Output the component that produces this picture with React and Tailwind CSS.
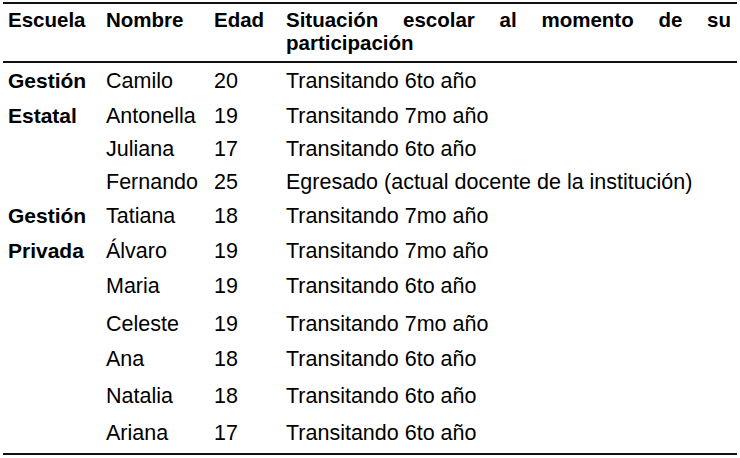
const rows = [
  { escuela: "Gestión", nombre: "Camilo", edad: "20", situacion: "Transitando 6to año", h: "h-[35px]" },
  { escuela: "Estatal", nombre: "Antonella", edad: "19", situacion: "Transitando 7mo año", h: "h-[33px]" },
  { escuela: "", nombre: "Juliana", edad: "17", situacion: "Transitando 6to año", h: "h-[33px]" },
  { escuela: "", nombre: "Fernando", edad: "25", situacion: "Egresado (actual docente de la institución)", h: "h-[34px]" },
  { escuela: "Gestión", nombre: "Tatiana", edad: "18", situacion: "Transitando 7mo año", h: "h-[35px]" },
  { escuela: "Privada", nombre: "Álvaro", edad: "19", situacion: "Transitando 7mo año", h: "h-[35px]" },
  { escuela: "", nombre: "Maria", edad: "19", situacion: "Transitando 6to año", h: "h-[38px]" },
  { escuela: "", nombre: "Celeste", edad: "19", situacion: "Transitando 7mo año", h: "h-[35px]" },
  { escuela: "", nombre: "Ana", edad: "18", situacion: "Transitando 6to año", h: "h-[37px]" },
  { escuela: "", nombre: "Natalia", edad: "18", situacion: "Transitando 6to año", h: "h-[37px]" },
  { escuela: "", nombre: "Ariana", edad: "17", situacion: "Transitando 6to año", h: "h-[24px]" },
];

const App = () => {
  return (
    <div className="w-[740px] h-[458px] bg-white text-black font-['Liberation_Sans',Arial,sans-serif] overflow-hidden">
      <div className="mx-[3px] mt-[2px] border-t-2 border-b-2 border-[#111]">
        {/* header */}
        <div className="grid grid-cols-[103px_108px_72px_445px] pr-[7px] pt-[4px] pb-[7px] border-b-2 border-[#111] text-[20.5px] leading-[23px] font-bold">
          <div className="pl-[5px]">Escuela</div>
          <div>Nombre</div>
          <div>Edad</div>
          <div className="text-justify">Situación escolar al momento de su participación</div>
        </div>

        {/* body */}
        <div className="pt-[6px] pb-[8px] text-[21.5px] leading-[24px]">
          {rows.map((r, i) => (
            <div key={i} className={`grid grid-cols-[103px_108px_72px_445px] pr-[7px] items-start ${r.h}`}>
              <div className="pl-[5px] font-bold text-[21px]">{r.escuela}</div>
              <div>{r.nombre}</div>
              <div>{r.edad}</div>
              <div>{r.situacion}</div>
            </div>
          ))}
        </div>
      </div>
    </div>
  );
};

export default App;
